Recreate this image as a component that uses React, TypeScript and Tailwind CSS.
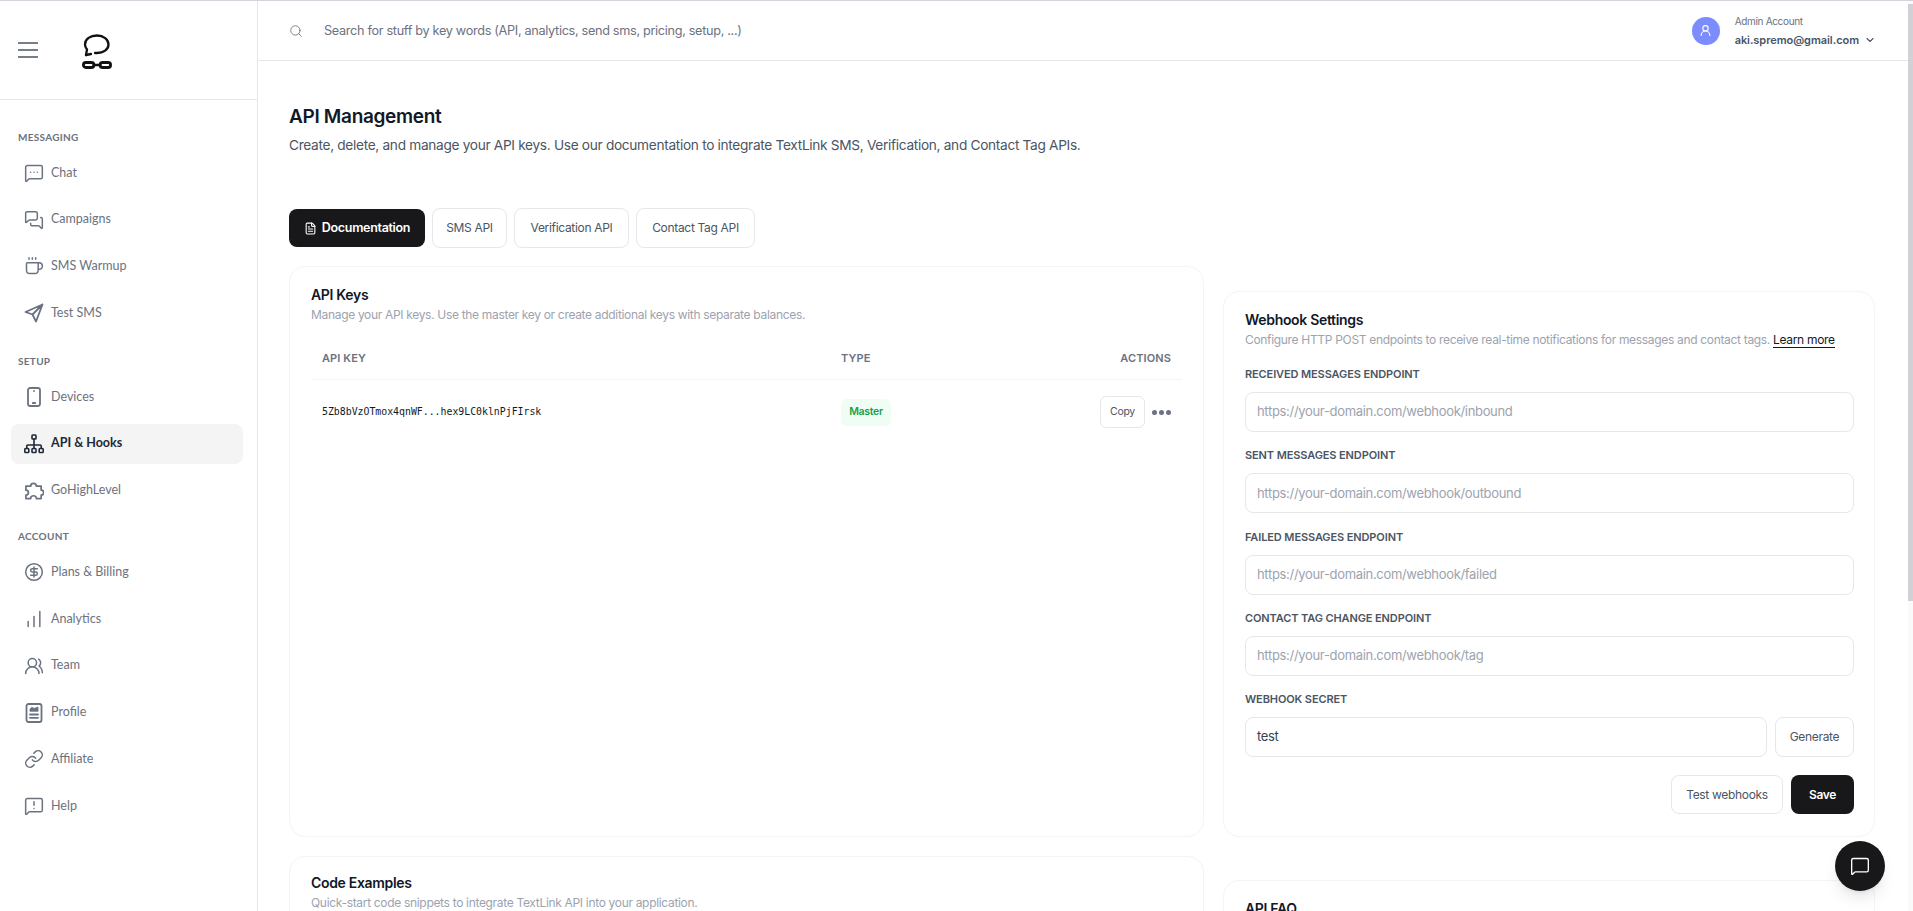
import React from "react";
import {
  MessageSquareMore,
  MessagesSquare,
  Coffee,
  CircleDollarSign,
  ChartNoAxesColumnIncreasing,
  UsersRound,
  Link,
  MessageSquareWarning,
  Search,
  ChevronDown,
  UserRound,
  FileText,
  MessageSquare,
} from "lucide-react";

const sans = "font-['Inter',sans-serif] tracking-[-0.02em]";

const svgProps = {
  width: 20,
  height: 20,
  viewBox: "0 0 20 20",
  fill: "none",
  stroke: "currentColor",
  strokeWidth: 1.8,
  strokeLinecap: "round" as const,
  strokeLinejoin: "round" as const,
};

function SendIcon() {
  return (
    <svg {...svgProps}>
      <path d="M1.500 9L18.500 1.500 12 18.500 8.500 11.500zM18.500 1.500L8.500 11.500" />
    </svg>
  );
}

function PhoneIcon() {
  return (
    <svg {...svgProps}>
      <rect x="4" y="1" width="12" height="18" rx="2.200" />
      <path d="M10 4h.01M8.800 16h2.400" />
    </svg>
  );
}

function TreeIcon() {
  return (
    <svg {...svgProps} strokeWidth={1.6}>
      <rect x="8" y="1" width="4" height="4" rx="0.800" />
      <rect x="0.800" y="14.500" width="4" height="4" rx="0.800" />
      <rect x="8" y="14.500" width="4" height="4" rx="0.800" />
      <rect x="15.200" y="14.500" width="4" height="4" rx="0.800" />
      <path d="M10 5v9.500M2.800 14.500v-2.500a1 1 0 0 1 1-1h12.400a1 1 0 0 1 1 1v2.500" />
    </svg>
  );
}

function PuzzleIcon() {
  return (
    <svg {...svgProps} width={21} height={21} viewBox="0 0 21 21">
      <path d="M2 6h5a3 3 0 1 1 6 0h5v4a2.700 2.700 0 0 1 0 5.400v3.600h-5a3 3 0 0 0-6 0H2v-3.600a2.700 2.700 0 0 0 0-5.400z" />
    </svg>
  );
}

function ProfileIcon() {
  return (
    <svg {...svgProps}>
      <rect x="2.500" y="1" width="15" height="18" rx="2" />
      <path d="M6 8V6l2-1.800L10 5.500l4-1.500v4z" fill="currentColor" strokeWidth="0.800" />
      <path d="M6 11.500h8M6 14.800h8" />
    </svg>
  );
}

function Logo() {
  return (
    <svg className="mt-[3px]" width="30" height="36" viewBox="0 0 30 36" fill="none" stroke="#111" strokeLinecap="round" strokeLinejoin="round">
      <path d="M4 21l1-5.500C3.500 13.500 3 12 3 10.500 3 5 8.500 1.500 15 1.500s11.500 4 11.500 9-5 8.500-11.500 8.500h-2" strokeWidth="2.300" />
      <path d="M4 21l5-1" strokeWidth="2.300" />
      <rect x="1.400" y="28.500" width="10.500" height="5" rx="2.500" strokeWidth="2.800" />
      <rect x="18.100" y="28.500" width="10.500" height="5" rx="2.500" strokeWidth="2.800" />
      <path d="M11.900 31h6.200" strokeWidth="2.500" />
    </svg>
  );
}

function HamburgerIcon() {
  return (
    <svg width="20" height="16" viewBox="0 0 20 16" fill="none" stroke="#4b5563" strokeWidth="1.500">
      <path d="M0 1h20M0 8h20M0 15h20" />
    </svg>
  );
}

type NavItem = { label: string; icon: React.ReactNode; active?: boolean };

const iconProps = { size: 20, strokeWidth: 1.8 };

const messaging: NavItem[] = [
  { label: "Chat", icon: <MessageSquareMore {...iconProps} /> },
  { label: "Campaigns", icon: <MessagesSquare {...iconProps} /> },
  { label: "SMS Warmup", icon: <Coffee {...iconProps} /> },
  { label: "Test SMS", icon: <SendIcon /> },
];

const setup: NavItem[] = [
  { label: "Devices", icon: <PhoneIcon /> },
  { label: "API & Hooks", icon: <TreeIcon />, active: true },
  { label: "GoHighLevel", icon: <PuzzleIcon /> },
];

const account: NavItem[] = [
  { label: "Plans & Billing", icon: <CircleDollarSign {...iconProps} /> },
  { label: "Analytics", icon: <ChartNoAxesColumnIncreasing {...iconProps} /> },
  { label: "Team", icon: <UsersRound {...iconProps} /> },
  { label: "Profile", icon: <ProfileIcon /> },
  { label: "Affiliate", icon: <Link {...iconProps} /> },
  { label: "Help", icon: <MessageSquareWarning {...iconProps} /> },
];

function NavGroup({ title, items, className }: { title: string; items: NavItem[]; className?: string }) {
  return (
    <div className={className}>
      <div className="pl-[7px] h-[14px] leading-[14px] text-[10px] font-bold tracking-[0.03em] text-[#6b7280] mb-[9px]">{title}</div>
      <div className="flex flex-col gap-[6.7px]">
        {items.map((item) => (
          <div
            key={item.label}
            className={`h-10 flex items-center rounded-lg pl-[13px] gap-[7px] text-[12.5px] ${
              item.active ? "bg-[#f4f4f5] text-[#1f2937] font-bold" : "text-[#6b7280]"
            }`}
          >
            <span className={`w-5 flex justify-center ${item.active ? "text-[#1f2937]" : "text-[#6b7280]"}`}>{item.icon}</span>
            <span>{item.label}</span>
          </div>
        ))}
      </div>
    </div>
  );
}

function Field({ label, placeholder }: { label: string; placeholder: string }) {
  return (
    <div>
      <div className="text-[11px] leading-[14px] font-semibold tracking-[-0.01em] text-[#4b5563] mb-[11px]">{label}</div>
      <div className="h-10 border border-[#e5e7eb] rounded-lg px-[11px] flex items-center text-[13px] text-[#9ca3af]">{placeholder}</div>
    </div>
  );
}

export default function App() {
  return (
    <div className="h-[911px] flex overflow-hidden bg-white border-t border-[#d1d5db] font-['Lato',sans-serif]">
      <aside className="w-[258px] shrink-0 border-r border-[#e5e7eb]">
        <div className="h-[99px] border-b border-[#e5e7eb] flex items-center pl-[18px] gap-[44px]">
          <HamburgerIcon />
          <Logo />
        </div>
        <div className="pt-[30px] px-[11px] w-[254px]">
          <NavGroup title="MESSAGING" items={messaging} />
          <NavGroup title="SETUP" items={setup} className="mt-[21px]" />
          <NavGroup title="ACCOUNT" items={account} className="mt-[19px]" />
        </div>
      </aside>

      <main className={`flex-1 min-w-0 flex flex-col ${sans}`}>
        <header className="h-[60px] shrink-0 border-b border-[#e5e7eb] flex items-center pl-[31px] pr-[32px]">
          <Search size={14} strokeWidth={1.5} className="text-[#6b7280]" />
          <span className="ml-[21px] text-[12.7px] text-[#6b7280]">Search for stuff by key words (API, analytics, send sms, pricing, setup, ...)</span>
          <div className="ml-auto flex items-center gap-[15px]">
            <div className="w-7 h-7 rounded-full bg-[#7c8cff] flex items-center justify-center text-white">
              <UserRound size={13} strokeWidth={2} />
            </div>
            <div>
              <div className="text-[10px] leading-[13px] text-[#6b7280]">Admin Account</div>
              <div className="mt-[5px] flex items-center gap-[5px] text-[11px] leading-[14px] font-semibold tracking-[-0.005em] text-[#475569]">
                aki.spremo@gmail.com
                <ChevronDown size={12} strokeWidth={2.2} />
              </div>
            </div>
          </div>
        </header>

        <div className="flex-1 overflow-hidden pl-[31px]">
          <h1 className="mt-[44px] text-[19px] leading-[24px] font-semibold text-[#111827]">API Management</h1>
          <p className="mt-[6px] text-[13.7px] leading-[20px] text-[#4b5563]">
            Create, delete, and manage your API keys. Use our documentation to integrate TextLink SMS, Verification, and Contact Tag APIs.
          </p>

          <div className="mt-[53px] flex items-center gap-[7px] text-[12px] text-[#4b5563]">
            <div className="h-[38px] w-[136px] rounded-lg bg-[#18181b] text-white text-[12.5px] font-semibold flex items-center justify-center gap-[5px]">
              <FileText size={13} />
              Documentation
            </div>
            <div className="h-10 w-[75px] rounded-lg border border-[#e5e7eb] flex items-center justify-center">SMS API</div>
            <div className="h-10 w-[115px] rounded-lg border border-[#e5e7eb] flex items-center justify-center">Verification API</div>
            <div className="h-10 w-[119px] rounded-lg border border-[#e5e7eb] flex items-center justify-center">Contact Tag API</div>
          </div>

          <div className="mt-[18px] grid grid-cols-[915px_652px] gap-x-[19px]">
            <section className="h-[571px] border border-[#f3f4f6] rounded-2xl px-[21px] pt-[19px]">
              <h2 className="text-[14px] leading-[18px] font-semibold text-[#111827]">API Keys</h2>
              <p className="mt-[3px] text-[12px] leading-[16px] text-[#9ca3af]">Manage your API keys. Use the master key or create additional keys with separate balances.</p>
              <div className="mt-[17px] h-[40px] pb-[2px] border-b border-[#f3f4f6] flex items-center px-[11px] text-[11px] font-semibold tracking-[0.01em] text-[#6b7280]">
                <span className="w-[519px]">API KEY</span>
                <span>TYPE</span>
                <span className="ml-auto">ACTIONS</span>
              </div>
              <div className="h-[64px] flex items-center px-[11px]">
                <span className="w-[519px] font-['DejaVu_Sans_Mono',monospace] tracking-normal text-[9.85px] text-[#111827]">5Zb8bVzOTmox4qnWF...hex9LC0klnPjFIrsk</span>
                <span className="h-[27px] w-[50px] flex items-center justify-center rounded-md bg-[#f0fdf4] text-[10.5px] font-semibold text-[#16a34a]">Master</span>
                <div className="ml-auto flex items-center gap-[7px]">
                  <span className="h-8 w-[45px] rounded-md border border-[#e5e7eb] flex items-center justify-center text-[10.5px] text-[#4b5563]">Copy</span>
                  <span className="flex gap-[2px] w-[19px]">
                    <i className="w-[5px] h-[5px] rounded-full bg-[#6b7280]" />
                    <i className="w-[5px] h-[5px] rounded-full bg-[#6b7280]" />
                    <i className="w-[5px] h-[5px] rounded-full bg-[#6b7280]" />
                  </span>
                </div>
              </div>
            </section>

            <section className="mt-[25px] h-[546px] border border-[#f3f4f6] rounded-2xl pl-[21px] pr-[20px] pt-[19px]">
              <h2 className="text-[14px] leading-[18px] font-semibold text-[#111827]">Webhook Settings</h2>
              <p className="mt-[3px] text-[12px] leading-[16px] text-[#9ca3af]">
                Configure HTTP POST endpoints to receive real-time notifications for messages and contact tags.{" "}
                <span className="text-[#111827] border-b border-[#111827]">Learn more</span>
              </p>
              <div className="mt-[19px] flex flex-col gap-[16.3px]">
                <Field label="RECEIVED MESSAGES ENDPOINT" placeholder="https://your-domain.com/webhook/inbound" />
                <Field label="SENT MESSAGES ENDPOINT" placeholder="https://your-domain.com/webhook/outbound" />
                <Field label="FAILED MESSAGES ENDPOINT" placeholder="https://your-domain.com/webhook/failed" />
                <Field label="CONTACT TAG CHANGE ENDPOINT" placeholder="https://your-domain.com/webhook/tag" />
                <div>
                  <div className="text-[11px] leading-[14px] font-semibold tracking-[-0.01em] text-[#4b5563] mb-[11px]">WEBHOOK SECRET</div>
                  <div className="flex gap-2">
                    <div className="flex-1 h-10 border border-[#e5e7eb] rounded-lg px-[11px] flex items-center text-[13px] text-[#374151]">test</div>
                    <div className="w-[79px] h-10 border border-[#e5e7eb] rounded-lg flex items-center justify-center text-[12px] text-[#4b5563]">Generate</div>
                  </div>
                </div>
              </div>
              <div className="mt-[18px] flex justify-end gap-2">
                <div className="w-[112px] h-[39px] border border-[#e5e7eb] rounded-lg flex items-center justify-center text-[12px] text-[#4b5563]">Test webhooks</div>
                <div className="w-[63px] h-[39px] bg-[#18181b] rounded-lg flex items-center justify-center text-[12px] font-semibold text-white">Save</div>
              </div>
            </section>

            <section className="mt-[19px] h-[200px] border border-[#f3f4f6] rounded-2xl px-[21px] pt-[17px]">
              <h2 className="text-[14px] leading-[18px] font-semibold text-[#111827]">Code Examples</h2>
              <p className="mt-[3px] text-[12px] leading-[16px] text-[#9ca3af]">Quick-start code snippets to integrate TextLink API into your application.</p>
            </section>
            <section className="mt-[43px] h-[200px] border border-[#f3f4f6] rounded-2xl px-[21px] pt-[19px]">
              <h2 className="text-[14px] leading-[18px] font-semibold text-[#111827]">API FAQ</h2>
            </section>
          </div>
        </div>
      </main>

      <div className="w-[5px] shrink-0 bg-[#fafafa] pt-[3px]">
        <div className="h-[597px] bg-[#d1d1d6]" />
      </div>

      <button className="fixed right-[28px] bottom-[20px] w-[50px] h-[50px] rounded-full bg-[#18181b] text-white flex items-center justify-center shadow-lg">
        <MessageSquare size={20} strokeWidth={1.6} />
      </button>
    </div>
  );
}
